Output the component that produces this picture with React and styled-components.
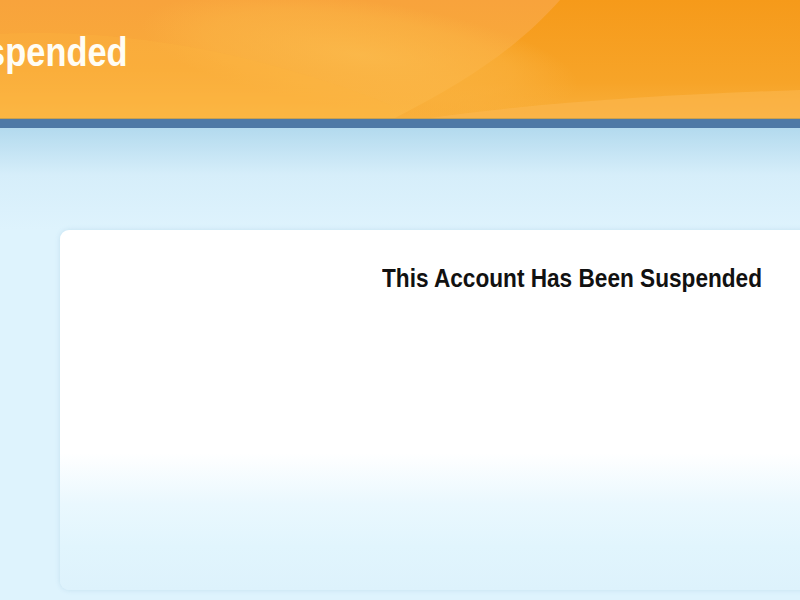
import styled, { createGlobalStyle } from 'styled-components'

const GlobalStyle = createGlobalStyle`
  html, body {
    margin: 0;
    padding: 0;
    background: #def3fd;
  }
  body {
    font-family: "Liberation Sans", Arial, sans-serif;
    overflow: hidden;
  }
`

function HeaderWaves() {
  return (
    <Waves viewBox="0 0 800 118" preserveAspectRatio="none">
      <defs>
        <linearGradient id="base" x1="0" y1="0" x2="0" y2="1">
          <stop offset="0" stopColor="#f8a33c" />
          <stop offset="0.6" stopColor="#f9ab3a" />
          <stop offset="1" stopColor="#fbb744" />
        </linearGradient>
        <linearGradient id="right" x1="0" y1="0" x2="0" y2="1">
          <stop offset="0" stopColor="#f69a1a" />
          <stop offset="0.7" stopColor="#f7a428" />
          <stop offset="1" stopColor="#f9b03c" />
        </linearGradient>
        <radialGradient id="glow" cx="0.5" cy="0.5" r="0.5">
          <stop offset="0" stopColor="#fbbc4e" stopOpacity="0.75" />
          <stop offset="0.7" stopColor="#fbb747" stopOpacity="0.45" />
          <stop offset="1" stopColor="#fbb747" stopOpacity="0" />
        </radialGradient>
      </defs>
      <rect x="0" y="0" width="800" height="118" fill="url(#base)" />
      <path d="M560 0 C 520 45, 470 80, 395 118 L800 118 L800 0 Z" fill="url(#right)" />
      <ellipse cx="360" cy="55" rx="220" ry="55" fill="url(#glow)" transform="rotate(8 360 55)" />
      <path d="M0 34 C 120 28, 260 52, 390 105 L390 118 L0 118 Z" fill="#fbb43f" opacity="0.35" />
      <path d="M430 118 C 560 100, 690 94, 800 90 L800 118 Z" fill="#fbb852" opacity="0.55" />
    </Waves>
  )
}

function App() {
  return (
    <>
      <GlobalStyle />
      <Page>
        <Header>
          <HeaderWaves />
          <SiteTitle>Account Suspended</SiteTitle>
        </Header>
        <BlueBar />
        <Main>
          <Card>
            <CardTitle>This Account Has Been Suspended</CardTitle>
          </Card>
        </Main>
      </Page>
    </>
  )
}

const Page = styled.div`
  width: 100%;
  height: 600px;
  overflow: hidden;
  background: linear-gradient(180deg, #b3daee 128px, #d6eefa 175px, #def3fd 230px, #def3fd 100%);
`

const Header = styled.header`
  position: relative;
  height: 118px;
  box-sizing: border-box;
  padding-top: 32px;
  overflow: hidden;
`

const Waves = styled.svg`
  position: absolute;
  inset: 0;
  width: 100%;
  height: 100%;
`

const SiteTitle = styled.h1`
  position: relative;
  margin: 0 0 0 -205px;
  display: inline-block;
  white-space: nowrap;
  font-size: 40px;
  line-height: 1;
  font-weight: bold;
  color: #fffdf5;
  transform: scaleX(0.86);
  transform-origin: left center;
`

const BlueBar = styled.div`
  height: 10px;
  background: #4e79a6;
  border-top: 1px solid #c9a04e;
  box-sizing: border-box;
`

const Main = styled.main`
  padding: 102px 0 0 60px;
`

const Card = styled.section`
  height: 360px;
  margin-right: -40px;
  border-radius: 9px;
  background: linear-gradient(180deg, #ffffff 0%, #ffffff 62%, #eaf8fe 76%, #e1f5fd 88%, #ddf2fc 100%);
  box-shadow: 0 0 5px rgba(160, 200, 222, 0.45);
  padding-top: 35px;
  box-sizing: border-box;
`

const CardTitle = styled.h2`
  margin: 0 0 0 322px;
  display: inline-block;
  white-space: nowrap;
  font-size: 26px;
  line-height: 1;
  font-weight: bold;
  color: #111111;
  transform: scaleX(0.87);
  transform-origin: left center;
`

export default App
